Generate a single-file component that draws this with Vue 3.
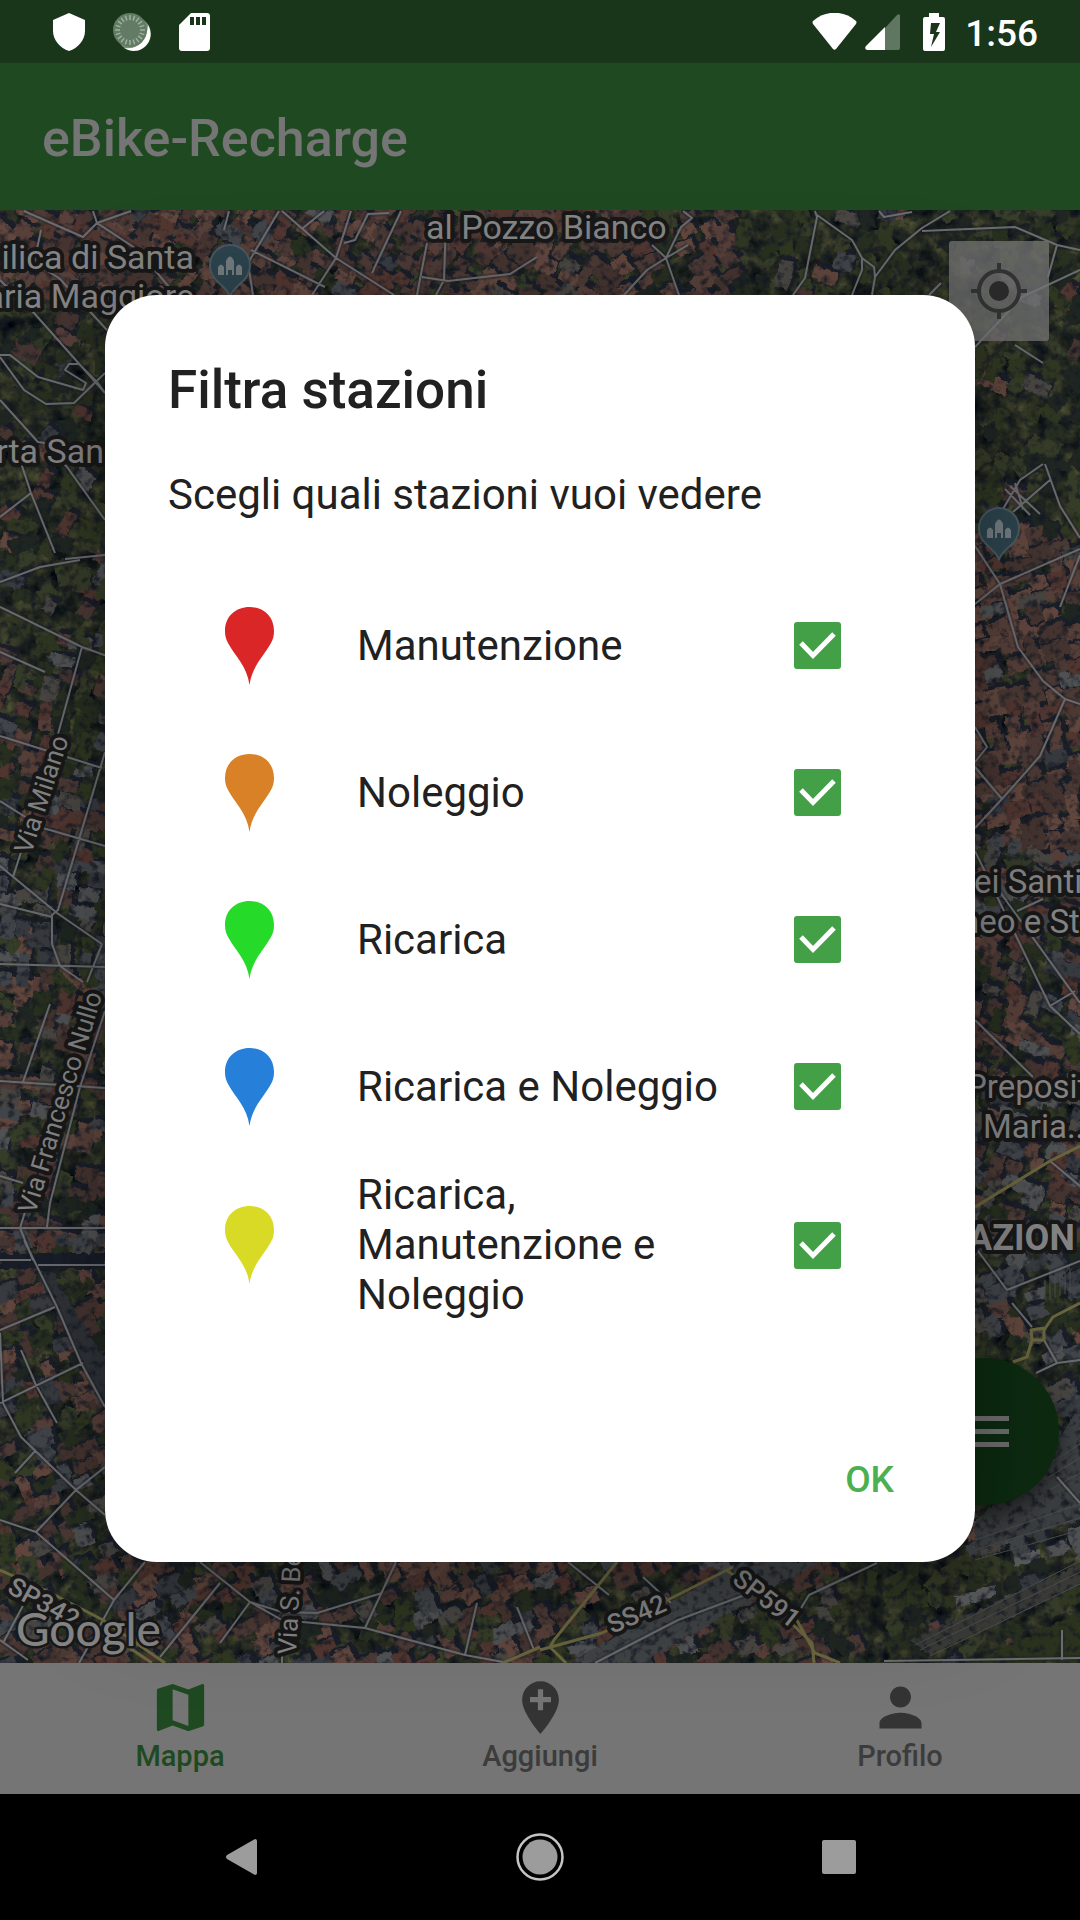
<script setup>
import { ref } from 'vue'

const stations = ref([
  { id: 'manutenzione', label: 'Manutenzione', color: '#da2627', on: true },
  { id: 'noleggio', label: 'Noleggio', color: '#d98127', on: true },
  { id: 'ricarica', label: 'Ricarica', color: '#26da29', on: true },
  { id: 'ricarica-noleggio', label: 'Ricarica e Noleggio', color: '#2680da', on: true },
  { id: 'tutte', label: 'Ricarica, Manutenzione e Noleggio', color: '#d9da26', on: true },
])

// Road polylines, grouped by map tile: origin, scale, then point lists.
const tiles = [
  { ox: 0, oy: 200, sx: 2.904, sy: 3, lines: [
    '70,32 240,110 282,68 380,32', '282,68 270,32', '282,68 400,150 490,260', '0,240 100,340 305,580',
    '100,190 170,235 310,390', '0,465 30,465 110,530 240,570 250,550 190,510 200,492 230,492 285,550 305,580',
    '0,470 70,570 135,612 215,610 305,520', '0,600 110,725 130,730 195,800 305,960', '60,790 90,880 160,1060',
    '90,880 0,950', '810,32 720,190 735,285', '820,32 975,175 1145,285', '730,150 945,260',
    '1020,32 975,175 905,285', '1165,32 1080,220', '1000,130 1030,120 1070,42 1130,38', '1240,130 1210,285',
    '1225,232 1300,242 1480,222 1560,170', '1295,60 1290,240 1265,285', '880,85 940,32', '665,32 650,90',
    '190,1078 305,1065', '120,90 100,190'] },
  { ox: 540, oy: 0, sx: 2.904, sy: 3, lines: [
    '245,885 310,810 365,775 405,885', '365,775 410,680 440,655 415,632', '325,735 365,775 430,735',
    '800,632 805,650 770,835 735,885', '805,645 905,720 935,775 935,810 905,885', '935,775 970,800 972,830',
    '965,885 972,830 1030,750 1110,685 1190,632', '1110,692 1380,682 1500,735 1568,750', '1500,735 1475,830',
    '1263,1040 1400,890 1568,810', '985,632 1000,650 1080,635', '1130,885 1165,850', '1380,1035 1460,1090'] },
  { ox: 0, oy: 560, sx: 3, sy: 2.24, lines: [
    '0,50 120,15 240,0', '0,105 245,195 320,215', '245,195 175,390', '70,640 40,710', '0,395 305,465',
    '315,430 175,785 155,795 155,860 180,910 250,945', '0,205 135,250', '0,540 130,600 315,640',
    '0,685 170,790 305,860', '0,770 155,800', '305,860 260,945', '0,905 315,912', '150,995 68,1170',
    '315,1010 240,1180 150,1440 140,1495', '0,1168 315,1182', '0,1380 70,1395', '0,1497 315,1497',
    '75,1460 60,1497 100,1568'] },
  { ox: 0, oy: 1240, sx: 2.904, sy: 3, lines: [
    '70,0 165,200 235,370 305,500', '0,60 90,60', '110,75 305,75', '0,270 160,200', '0,490 240,370',
    '60,330 105,435 165,550', '0,280 8,490 60,590 220,750 305,825', '305,680 220,750 105,875 0,840',
    '105,875 330,1080 300,1140 230,1268', '45,700 105,630', '330,1080 420,965',
    '580,965 725,1085 820,1140 1060,1165 1350,1245 1460,1265', '640,1030 465,1250', '725,1085 640,1210',
    '725,1085 820,1115 920,1120 1110,1060', '1150,965 1060,1165', '1385,1090 1350,1245', '1500,1100 1550,1230',
    '75,1080 10,1210', '0,1200 80,1260', '820,1240 820,1268'] },
  { ox: 540, oy: 1300, sx: 2.904, sy: 3, lines: [
    '80,786 200,885', '300,830 380,910', '160,1088 400,960 610,880', '750,940 780,885 980,790',
    '1465,120 1500,190 1568,180', '1440,220 1500,190', '1000,1083 1568,1075', '1515,990 1515,1080',
    '1500,530 1568,610', '1370,10 1430,80'] },
  { ox: 960, oy: 400, sx: 3, sy: 1.742, lines: [
    '45,355 120,320 360,260', '45,255 120,320 175,430 250,490 315,520 360,530', '315,520 240,620 125,695 45,745',
    '45,640 125,695', '45,570 80,605 45,630', '255,112 300,185 360,240', '250,112 180,140 130,190',
    '270,140 160,195', '150,150 240,198', '135,155 210,200', '165,145 190,190', '45,785 270,1055 360,1105',
    '110,850 360,1050', '270,1055 345,1030', '45,1080 220,1180', '170,890 250,870', '270,1325 360,1370',
    '45,1475 140,1550', '140,1550 360,1500', '300,360 360,270'] },
]
const yellow = [
  { ox: 0, oy: 1240, sx: 2.904, sy: 3, lines: ['0,990 130,1050 300,1140 480,1268', '300,1170 440,1268', '1460,1268 1568,1220'] },
  { ox: 540, oy: 1300, sx: 2.904, sy: 3, lines: [
    '225,786 40,1020 30,1040 75,1088', '0,1050 180,1000 560,800', '540,810 740,950 800,1060 870,1088',
    '720,960 790,1030 795,1088', '1568,10 1490,50 1465,90 1465,120 1430,120 1425,90 1465,85',
    '1430,120 1415,170 1375,185'] },
  { ox: 960, oy: 400, sx: 3, sy: 1.742, lines: ['45,1405 270,1325 360,1300'] },
]
const toPath = (groups) => groups.flatMap((t) => t.lines.map((l) =>
  'M' + l.split(' ').map((p) => {
    const [x, y] = p.split(',').map(Number)
    return `${Math.round(t.ox + x / t.sx)} ${Math.round(t.oy + y / t.sy)}`
  }).join('L'))).join('')
const roadPath = toPath(tiles)
const yellowPath = toPath(yellow)

// Rooftops and tree clumps: x, y, width, height, roof share, grey share, street angle
const zones = [
  [0, 210, 620, 90, 0.92, 0.05, 0.6],
  [620, 210, 120, 90, 0.6, 0.05, -0.5],
  [740, 210, 340, 90, 0.08, 0.4, 0.3],
  [0, 300, 106, 340, 0.14, 0.2, 0.5],
  [0, 640, 106, 220, 0.5, 0.25, 0.3],
  [0, 860, 106, 120, 0.7, 0.8, 0.1],
  [0, 980, 106, 260, 0.6, 0.4, 0.2],
  [0, 1240, 106, 322, 0.6, 0.35, -0.4],
  [970, 300, 110, 230, 0.08, 0.3, 0.5],
  [970, 530, 110, 310, 0.95, 0.05, -0.3],
  [970, 840, 110, 400, 0.75, 0.35, 0.4],
  [970, 1240, 110, 320, 0.5, 0.9, -0.4],
  [0, 1562, 830, 102, 0.65, 0.3, -0.5],
  [830, 1562, 250, 102, 0.08, 0.4, -0.4],
]
let seed = 41
const rnd = () => {
  seed = (seed * 16807) % 2147483647
  return seed / 2147483647
}
const reds = ['#58403a', '#523731', '#62473e', '#4c3a35', '#463531']
const greys = ['#42464a', '#505254', '#383b40', '#4a4743']
const greens = ['#283020', '#303822', '#202722', '#363d28']
const layers = {}
const add = (c, d) => { layers[c] = (layers[c] || '') + d }
const quad = (x, y, w, h, a) => {
  const c = Math.cos(a), s = Math.sin(a)
  return 'M' + [[-w, -h], [w, -h], [w, h], [-w, h]]
    .map(([u, v]) => `${Math.round(x + (u * c - v * s) / 2)} ${Math.round(y + (u * s + v * c) / 2)}`).join('L') + 'Z'
}
let shadows = ''
for (const [zx, zy, zw, zh, roof, grey, ang] of zones) {
  for (let y = zy; y < zy + zh; y += 16) {
    for (let x = zx; x < zx + zw; x += 20) {
      const px = x + rnd() * 10, py = y + rnd() * 8
      const w = 14 + rnd() * 16, h = 10 + rnd() * 8
      const a = ang + (rnd() - 0.5) * 0.2 + (rnd() > 0.65 ? 1.57 : 0)
      if (rnd() < roof) {
        const set = rnd() < grey ? greys : reds
        shadows += quad(px + 3, py - 4, w + 1, h + 1, a)
        add(set[Math.floor(rnd() * set.length)], quad(px, py, w, h, a))
      } else if (rnd() < 0.5) {
        add(greens[Math.floor(rnd() * 4)], quad(px, py, w, h, rnd() * 3))
      }
    }
  }
}
const roofLayers = Object.entries(layers).map(([fill, d]) => ({ fill, d }))

const labels = [
  { t: 'al Pozzo Bianco', x: 426, y: 239, s: 34 },
  { t: 'Basilica di Santa', x: 194, y: 269, s: 34, a: 'end' },
  { t: 'Maria Maggiore', x: 194, y: 308, s: 34, a: 'end' },
  { t: 'Porta San', x: 104, y: 463, s: 34, a: 'end' },
  { t: 'ei Santi', x: 974, y: 893, s: 33 },
  { t: 'neo e St', x: 961, y: 933, s: 33 },
  { t: 'Preposit', x: 966, y: 1098, s: 33 },
  { t: 'Maria...', x: 983, y: 1138, s: 33 },
  { t: 'AZION', x: 968, y: 1250, s: 36, w: 700 },
  { t: 'Via Milano', x: 31, y: 855, s: 26, r: -72 },
  { t: 'Via Francesco Nullo', x: 35, y: 1215, s: 26, r: -73 },
  { t: 'Via S. Bernardino', x: 296, y: 1655, s: 26, r: -87 },
  { t: 'SP342', x: 6, y: 1592, s: 26, r: 29, w: 500 },
  { t: 'SS42', x: 612, y: 1634, s: 26, r: -23, w: 500 },
  { t: 'SP591', x: 731, y: 1582, s: 26, r: 38, w: 500 },
]
const places = [[230, 265], [999, 528]]
const rays = Array.from({ length: 20 }, (_, i) => i * 18)
</script>

<template>
  <div class="screen">
    <header class="status">
      <div class="status-left">
        <svg width="32" height="38" viewBox="0 0 32 38"><path fill="#fff" d="M16 0 32 7v11c0 9-7 17-16 20C7 35 0 27 0 18V7z" /></svg>
        <svg width="38" height="38" viewBox="0 0 38 38">
          <circle cx="21" cy="21" r="17" fill="#7d917e" />
          <path d="M35 12a17 17 0 0 1-24 23c13 2 23-6 24-23z" fill="#fff" />
          <circle cx="17" cy="17" r="17" fill="#627b64" />
          <g stroke="#9fb0a0" stroke-width="1.5"><path v-for="r in rays" :key="r" d="M17 2v5" :transform="`rotate(${r} 17 17)`" /></g>
        </svg>
        <svg width="31" height="38" viewBox="0 0 31 38"><path fill="#fff" fill-rule="evenodd" d="M12 0h16a3 3 0 0 1 3 3v32a3 3 0 0 1-3 3H3a3 3 0 0 1-3-3V12zM11 4v8h4V4zm6 0v8h4V4zm6 0v8h4V4z" /></svg>
      </div>
      <div class="status-right">
        <svg width="45" height="37" viewBox="0 0 45 37"><path fill="#fff" d="M1 8C13-3 32-3 44 8q1 1 0 3L24 36q-1.5 1.5-3 0L1 11Q0 9 1 8z" /></svg>
        <svg class="signal" width="35" height="36" viewBox="0 0 35 36"><path fill="#5f7660" d="M20 14 32 1q3-2 3 1v32q0 2-2 2H20z" /><path fill="#fff" d="M20 13v23H2q-3-1-1-4z" /></svg>
        <svg class="battery" width="22" height="38" viewBox="0 0 22 38"><path fill="#fff" fill-rule="evenodd" d="M6 0h10v4h4q2 0 2 2v30q0 2-2 2H2q-2 0-2-2V6q0-2 2-2h4zm2 10L7 21h4L8 34l9-15h-4l4-9z" /></svg>
        <span class="time">1:56</span>
      </div>
    </header>

    <div class="appbar"><h1>eBike-Recharge</h1></div>

    <main class="map">
      <svg class="canvas" viewBox="0 210 1080 1453" preserveAspectRatio="xMidYMin slice">
        <defs>
          <filter id="ground" x="0" y="0" width="100%" height="100%" color-interpolation-filters="sRGB">
            <feTurbulence type="fractalNoise" baseFrequency="0.06" numOctaves="4" seed="8" />
            <feColorMatrix values="0.42 0 0 0 -0.06  0.4 0 0 0 -0.03  0.18 0 0 0 0.04  0 0 0 0 1" />
          </filter>
          <filter id="rough" x="0" y="0" width="100%" height="100%" color-interpolation-filters="sRGB">
            <feTurbulence type="fractalNoise" baseFrequency="0.15" numOctaves="2" seed="3" />
            <feDisplacementMap in="SourceGraphic" scale="6" xChannelSelector="R" yChannelSelector="G" />
          </filter>
          <filter id="grain" x="0" y="0" width="100%" height="100%" color-interpolation-filters="sRGB">
            <feTurbulence type="fractalNoise" baseFrequency="0.13" numOctaves="3" seed="5" />
            <feColorMatrix values="0 0 0 0 0.08  0 0 0 0 0.1  0 0 0 0 0.14  2.4 0 0 0 -1.15" />
          </filter>
        </defs>
        <rect y="210" width="1080" height="1453" fill="#1d241b" filter="url(#ground)" />
        <g filter="url(#rough)">
          <path :d="shadows" fill="#1a1f2a" />
          <path v-for="l in roofLayers" :key="l.fill" :d="l.d" :fill="l.fill" />
          <path d="M0 1253h106v16H0z" fill="#191e2a" />
          <path d="M36 1272h16l54 90v50z" fill="#2f3338" />
          <path d="M570 1663 740 1562h80L640 1663z" fill="#404446" />
          <path d="M975 1550 1080 1520V1400l-30 60-75 60z" fill="#3d4042" />
          <path d="M910 1640 1080 1565v20l-150 70z" fill="#3a3a36" />
          <path d="M970 1663l110-50v50z" fill="#2b331e" />
          <path d="M955 1597l40-12v10l-40 14zM1014 1558l26-9v9l-26 9z" fill="#5a5c5e" />
        </g>
        <rect y="210" width="1080" height="1453" filter="url(#grain)" />
        <g stroke="#4b4d50" stroke-width="1" fill="none">
          <path d="M975 1560l105-30M975 1550l105-32M975 1540l105-36M1040 1470l40-26M1044 1480l36-22M1050 1490l30-17M920 1650l160-78M930 1656l150-72M915 1645l165-84M1045 1300v-20M1050 1300v-22M1055 1298v-22M1060 1296v-22M1065 1294v-22M1070 1292v-22" />
        </g>
        <path :d="roadPath" class="casing" />
        <path :d="roadPath" class="road" />
        <path :d="yellowPath" class="road main" />
        <g v-for="p in places" :key="p[0]" :transform="`translate(${p[0]} ${p[1]})`">
          <path d="M0 32C-3 20-20 17-20 0a20 20 0 0 1 40 0C20 17 3 20 0 32z" fill="#2d444e" stroke="#4a5a60" stroke-width="2" />
          <path d="M-12 10V2q3-5 6 0v8zM6 10V2q3-5 6 0v8zM-4 10V-4q4-9 8 0v14H2V5h-4v5z" fill="#747c80" />
        </g>
        <text v-for="l in labels" :key="l.t" class="label" :x="l.x" :y="l.y" :font-size="l.s" :font-weight="l.w || 400"
          :text-anchor="l.a || 'start'" :transform="l.r ? `rotate(${l.r} ${l.x} ${l.y})` : undefined">{{ l.t }}</text>
        <text class="label google" x="16" y="1646">Google</text>
      </svg>
      <button class="locate" type="button" aria-label="La mia posizione">
        <svg width="58" height="58" viewBox="0 0 58 58"><circle cx="29" cy="29" r="20" fill="none" stroke="#333" stroke-width="4" /><circle cx="29" cy="29" r="10" fill="#2b2b2b" /><path d="M29 1v9M29 48v9M1 29h9M48 29h9" stroke="#333" stroke-width="4" /></svg>
      </button>
      <button class="fab" type="button" aria-label="Menu">
        <svg width="47" height="32" viewBox="0 0 47 32"><path d="M0 0h47v5H0zM0 13h47v5H0zM0 26h47v5H0z" fill="#6e6e6e" /></svg>
      </button>
    </main>

    <nav class="tabs">
      <a href="#mappa" class="tab active">
        <svg width="63" height="63" viewBox="0 0 24 24"><path fill="currentColor" d="M20.5 3l-.16.03L15 5.1 9 3 3.36 4.9c-.21.07-.36.25-.36.48V20.5c0 .28.22.5.5.5l.16-.03L9 18.9l6 2.1 5.64-1.9c.21-.07.36-.25.36-.48V3.5c0-.28-.22-.5-.5-.5zM15 19l-6-2.11V5l6 2.11V19z" /></svg>
        <span>Mappa</span>
      </a>
      <a href="#aggiungi" class="tab">
        <svg width="63" height="63" viewBox="0 0 24 24"><path fill="currentColor" d="M12 2C8.14 2 5 5.14 5 9c0 5.25 7 13 7 13s7-7.75 7-13c0-3.86-3.14-7-7-7zm4 8h-3v3h-2v-3H8V8h3V5h2v3h3v2z" /></svg>
        <span>Aggiungi</span>
      </a>
      <a href="#profilo" class="tab">
        <svg width="63" height="63" viewBox="0 0 24 24"><path fill="currentColor" d="M12 12c2.21 0 4-1.79 4-4s-1.79-4-4-4-4 1.79-4 4 1.79 4 4 4zm0 2c-2.67 0-8 1.34-8 4v2h16v-2c0-2.66-5.33-4-8-4z" /></svg>
        <span>Profilo</span>
      </a>
    </nav>

    <div class="overlay">
      <section class="dialog" role="dialog" aria-modal="true" aria-labelledby="dialog-title">
        <h2 id="dialog-title">Filtra stazioni</h2>
        <p>Scegli quali stazioni vuoi vedere</p>
        <ul>
          <li v-for="s in stations" :key="s.id">
            <svg class="pin" width="49" height="78" viewBox="0 0 49 78"><path :fill="s.color" d="M24.5 78C22 59 10 49 3 36 1 32 0 29 0 24 0 9 11 0 24.5 0S49 9 49 24c0 5-1 8-3 12C39 49 27 59 24.5 78z" /></svg>
            <label :for="s.id">{{ s.label }}</label>
            <span class="check">
              <input :id="s.id" v-model="s.on" type="checkbox" />
              <svg v-if="s.on" width="47" height="47" viewBox="0 0 47 47"><path d="M7 21l12 12.500L40 12" fill="none" stroke="#fff" stroke-width="5" /></svg>
            </span>
          </li>
        </ul>
        <div class="actions"><button type="button">OK</button></div>
      </section>
    </div>

    <footer class="sysnav">
      <button type="button" aria-label="Indietro"><svg width="31" height="36" viewBox="0 0 31 36"><path fill="#9c9c9c" d="M29 0q2 0 2 2v32q0 2-2 2L1 20q-2-2 0-4z" /></svg></button>
      <button type="button" aria-label="Home"><svg width="48" height="48" viewBox="0 0 48 48"><circle cx="24" cy="24" r="22.5" fill="none" stroke="#c4c4c4" stroke-width="2.5" /><circle cx="24" cy="24" r="17.5" fill="#9c9c9c" /></svg></button>
      <button type="button" aria-label="Recenti"><svg width="34" height="34" viewBox="0 0 34 34"><rect width="34" height="34" rx="2" fill="#9c9c9c" /></svg></button>
    </footer>
  </div>
</template>

<style>
body { background: #000; }
</style>

<style scoped>
* { box-sizing: border-box; }
.screen {
  position: relative;
  display: flex;
  flex-direction: column;
  min-height: 100vh;
  overflow: hidden;
  font-family: Roboto, "Liberation Sans", sans-serif;
}
svg { display: block; }
button { border: 0; padding: 0; background: none; font: inherit; }
.status {
  display: flex;
  justify-content: space-between;
  align-items: center;
  height: 63px;
  padding: 0 42px 0 53px;
  background: #19351a;
}
.status-left { display: flex; align-items: center; gap: 28px; }
.status-right { display: flex; align-items: center; color: #fff; }
.signal { margin-left: 8px; }
.battery { margin-left: 23px; }
.time { margin-left: 20px; padding-top: 4px; font-size: 37px; font-weight: 500; line-height: 44px; }
.appbar {
  display: flex;
  align-items: center;
  height: 147px;
  padding: 4px 42px 0;
  background: #1f4a21;
}
.appbar h1 { margin: 0; font-size: 52px; font-weight: 500; line-height: 62px; color: #757575; }
.map { position: relative; flex: 1; overflow: hidden; background: #1d241b; }
.canvas { position: absolute; inset: 0; width: 100%; height: 100%; }
.casing { fill: none; stroke: #191d26; stroke-width: 6; stroke-opacity: 0.3; stroke-linejoin: round; }
.road { fill: none; stroke: #6a6c70; stroke-width: 2; stroke-linejoin: round; }
.main { stroke: #6a663f; stroke-width: 3; }
.label {
  fill: #858585;
  stroke: #181818;
  stroke-width: 8px;
  stroke-linejoin: round;
  paint-order: stroke;
}
.google { font-family: Lato, sans-serif; font-size: 46px; font-weight: 500; stroke-width: 5px; }
.locate {
  position: absolute;
  top: 31px;
  right: 31px;
  display: grid;
  place-items: center;
  width: 100px;
  height: 100px;
  border-radius: 3px;
  background: rgba(117, 117, 117, 0.75);
}
.fab {
  position: absolute;
  right: 21px;
  bottom: 158px;
  display: grid;
  place-items: center;
  width: 147px;
  height: 147px;
  border-radius: 50%;
  background: #0d2b11;
  box-shadow: 0 10px 20px rgba(0, 0, 0, 0.5);
}
.tabs { display: flex; height: 131px; background: #757575; }
.tab {
  flex: 1;
  display: flex;
  flex-direction: column;
  align-items: center;
  padding-top: 13px;
  color: #343434;
  text-decoration: none;
  font-size: 29px;
  font-weight: 500;
  line-height: 34px;
}
.tab span { color: #3c3c3c; }
.active, .active span { color: #1f4a21; }
.overlay {
  position: absolute;
  inset: 63px 0 126px;
  display: flex;
  align-items: center;
  padding: 0 105px;
}
.dialog {
  flex: 1;
  padding: 64px 63px 20px;
  border-radius: 52px;
  background: #fff;
  color: #212121;
  box-shadow: 0 29px 40px rgba(0, 0, 0, 0.1), 0 24px 110px 20px rgba(0, 0, 0, 0.2);
}
h2 { margin: 0; font-size: 53px; font-weight: 500; line-height: 62px; }
p { margin: 49px 0 52px; font-size: 42px; line-height: 50px; }
ul { margin: 0; padding: 0; list-style: none; }
li {
  display: flex;
  align-items: center;
  min-height: 147px;
  padding: 10px 42px 10px 57px;
}
.pin { margin-right: 83px; }
label { flex: 1; margin-right: 13px; font-size: 42px; line-height: 50px; }
.check { display: grid; place-items: center; width: 105px; }
.check > * { grid-area: 1 / 1; }
.check svg { pointer-events: none; }
input {
  appearance: none;
  width: 47px;
  height: 47px;
  margin: 0;
  border: 5px solid #757575;
  border-radius: 3px;
}
input:checked { border-color: #43a047; background: #43a047; }
.actions { display: flex; justify-content: flex-end; padding-top: 86px; }
.actions button {
  height: 126px;
  padding: 0 18px;
  font-size: 37px;
  font-weight: 500;
  color: #4caf50;
}
.sysnav {
  display: flex;
  align-items: center;
  justify-content: space-around;
  height: 126px;
  padding: 0 92px;
  background: #000;
}
.sysnav button { display: grid; place-items: center; width: 126px; height: 126px; }
</style>
